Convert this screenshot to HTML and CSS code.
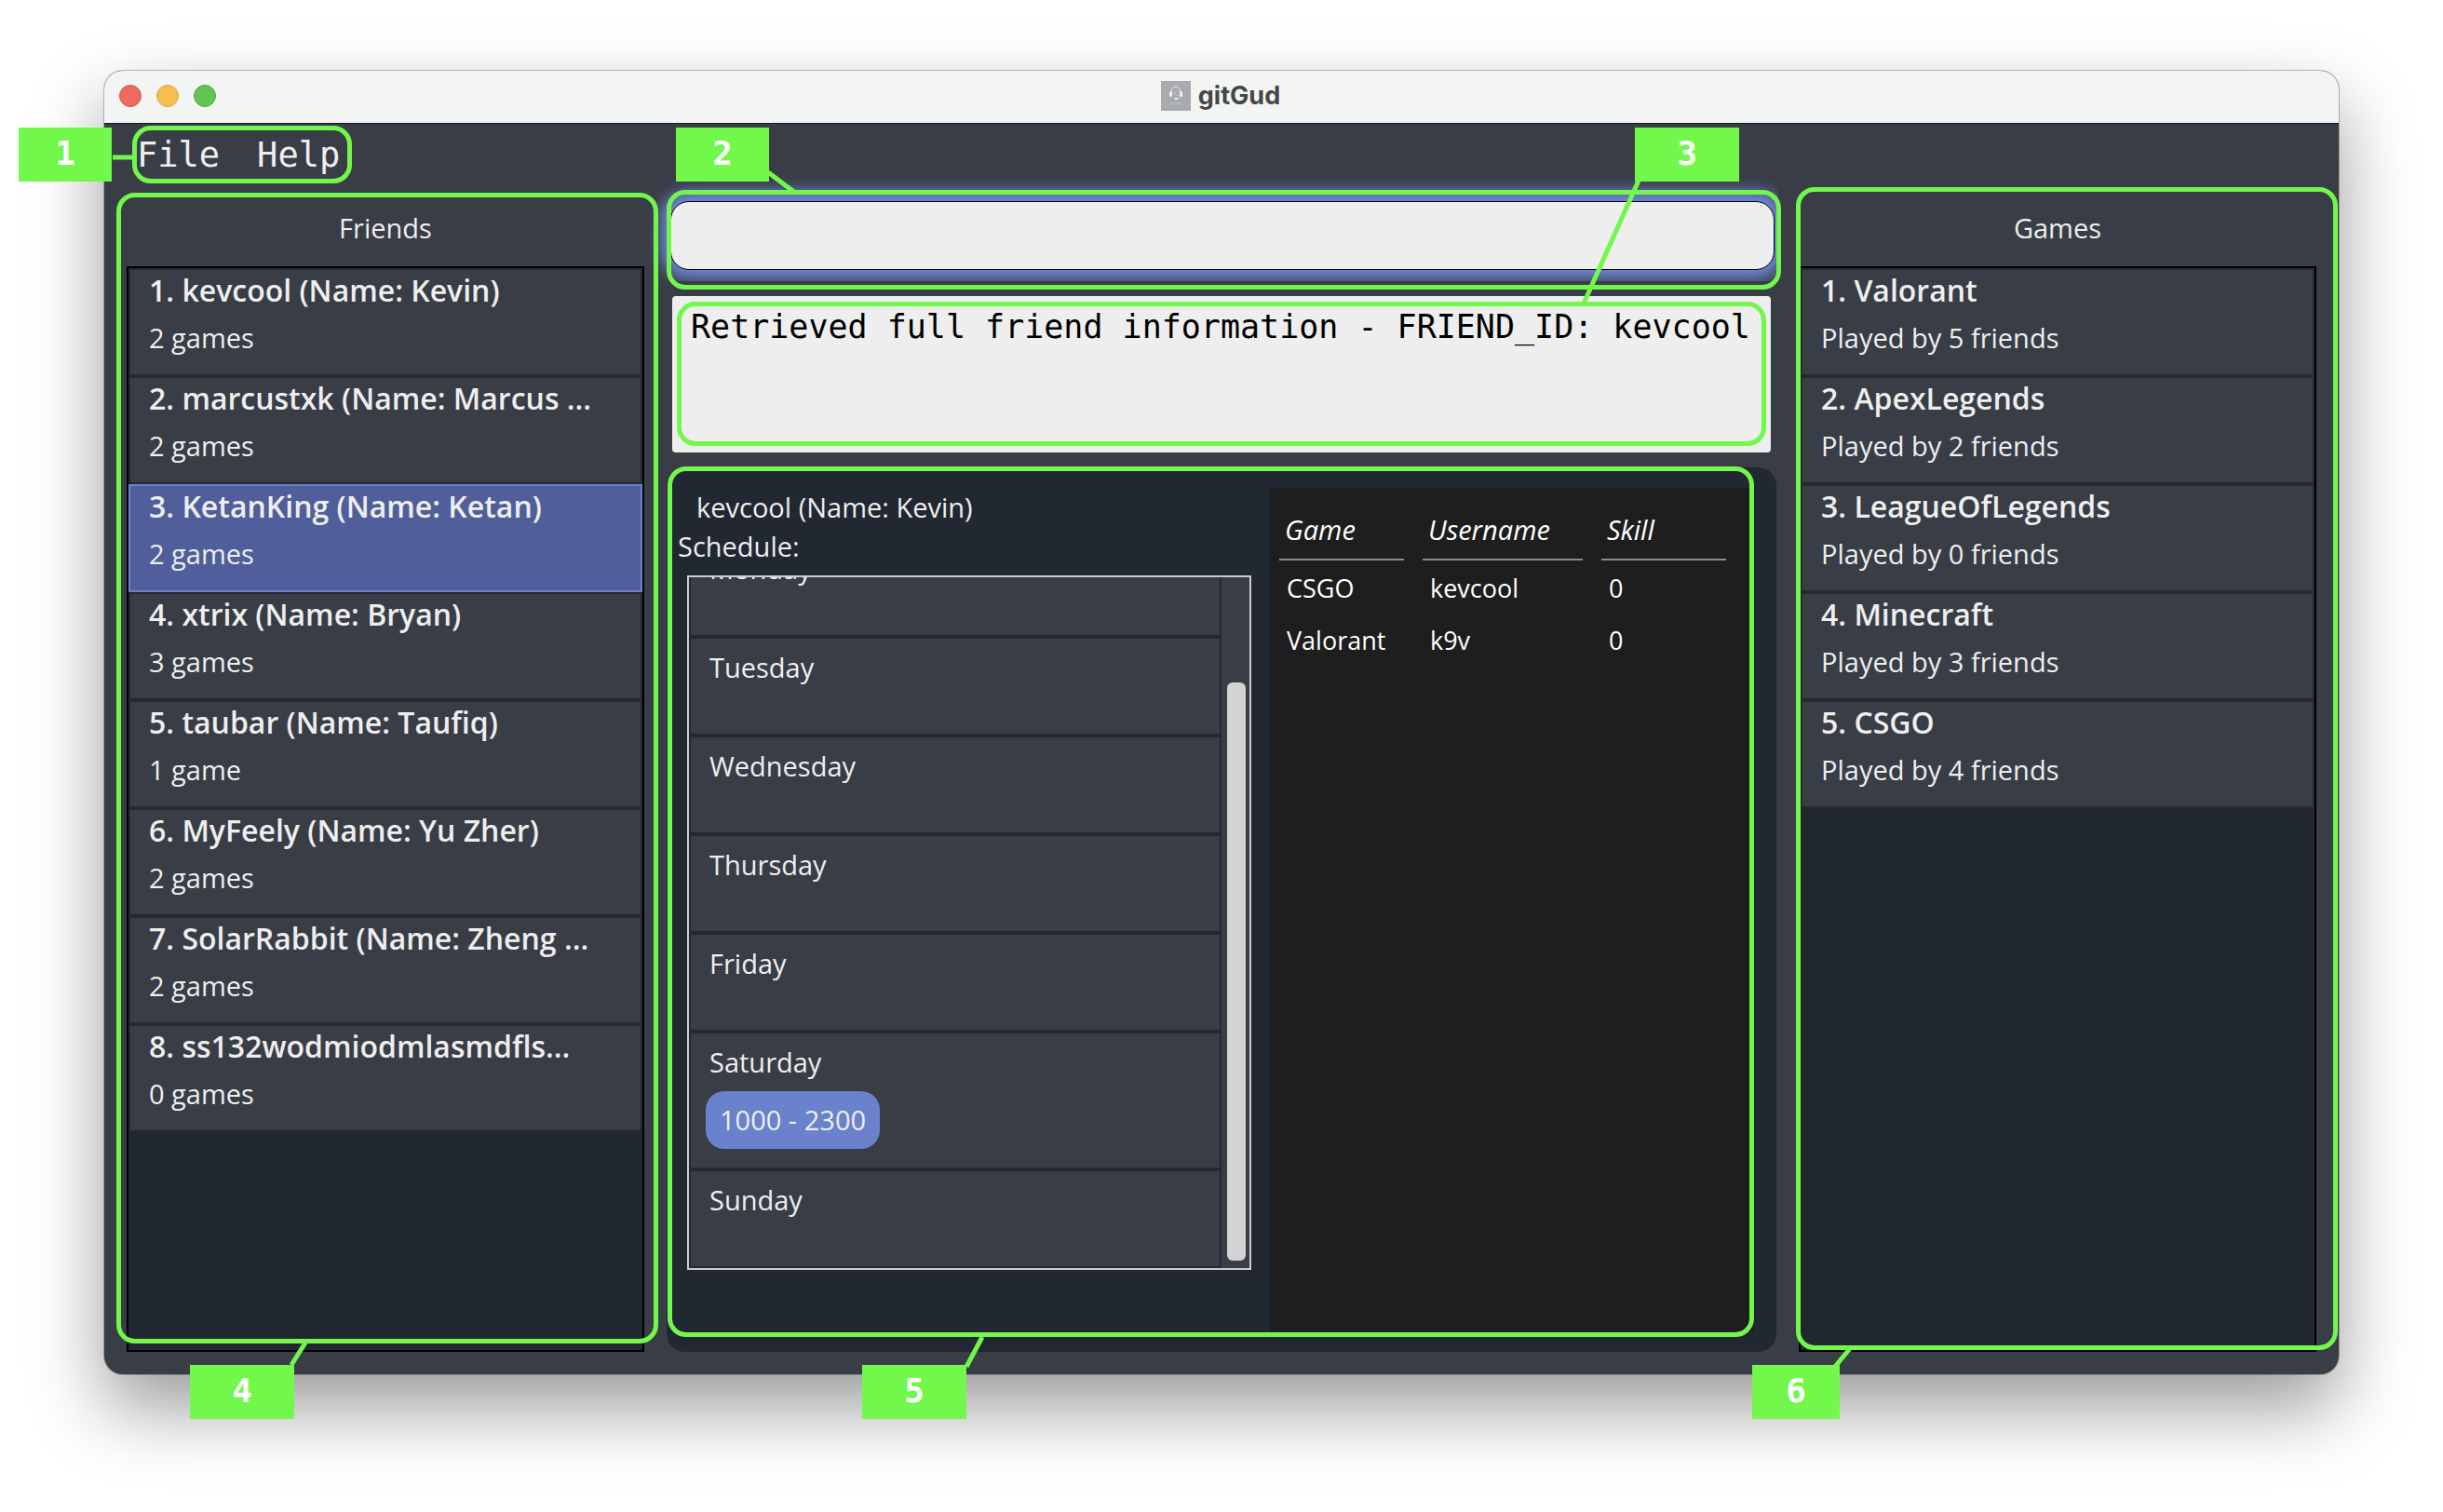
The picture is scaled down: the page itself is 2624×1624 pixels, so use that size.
FILE: index.html
```html
<!DOCTYPE html>
<html lang="en">
<head>
<meta charset="utf-8">
<title>gitGud</title>
<link rel="stylesheet" href="styles.css">
</head>
<body>
<div class="window">
  <header class="titlebar">
    <div class="lights"><span class="light red"></span><span class="light amber"></span><span class="light green"></span></div>
    <svg class="app-icon" viewBox="0 0 32 32" aria-hidden="true">
      <rect width="32" height="32" fill="#a9aaae"/>
      <path d="M11 12a5 6 0 0 1 10 0" fill="none" stroke="#e6e7e9" stroke-width="1"/>
      <rect x="9" y="11" width="3" height="6" rx="1.500" fill="#f1f1f3"/>
      <rect x="20" y="11" width="3" height="6" rx="1.500" fill="#f1f1f3"/>
      <path d="M13.500 12l2 1.500-2 1.500M16.500 15.500h2" fill="none" stroke="#d8d9dc" stroke-width=".7"/>
      <path d="M21.500 17q-1 2-4 2" fill="none" stroke="#dddee1" stroke-width=".8"/>
      <rect x="14.500" y="18" width="3.500" height="2" rx="1" fill="#f1f1f3"/>
      <path d="M9.500 24h13" stroke="#b3b7d4" stroke-width="2.500" stroke-dasharray="1.500 .5"/>
    </svg>
    <h1 class="title">gitGud</h1>
  </header>

  <nav class="menubar">
    <div class="menus">
      <button class="menu" type="button">File</button>
      <button class="menu" type="button">Help</button>
    </div>
    <span class="outline outline-menu"></span>
    <svg class="link link-menu" width="22" height="6" viewBox="0 0 22 6"><path d="M0 3H22"/></svg>
    <span class="badge badge-menu">1</span>
  </nav>

  <main class="content">
    <section class="side">
      <h2 class="side-title">Friends</h2>
      <ul class="cards">
        <li class="card"><strong class="name">1. kevcool (Name: Kevin)</strong><span class="sub">2 games</span></li>
        <li class="card"><strong class="name">2. marcustxk (Name: Marcus ...</strong><span class="sub">2 games</span></li>
        <li class="card selected"><strong class="name">3. KetanKing (Name: Ketan)</strong><span class="sub">2 games</span></li>
        <li class="card"><strong class="name">4. xtrix (Name: Bryan)</strong><span class="sub">3 games</span></li>
        <li class="card"><strong class="name">5. taubar (Name: Taufiq)</strong><span class="sub">1 game</span></li>
        <li class="card"><strong class="name">6. MyFeely (Name: Yu Zher)</strong><span class="sub">2 games</span></li>
        <li class="card"><strong class="name">7. SolarRabbit (Name: Zheng ...</strong><span class="sub">2 games</span></li>
        <li class="card"><strong class="name">8. ss132wodmiodmlasmdfls...</strong><span class="sub">0 games</span></li>
      </ul>
      <span class="outline outline-friends"></span>
      <svg class="link link-friends" width="26" height="30" viewBox="0 0 26 30"><path d="M4 28L21 1"/></svg>
      <span class="badge badge-friends">4</span>
    </section>

    <section class="center">
      <div class="command">
        <input class="command-box" type="text" aria-label="Command">
        <span class="outline outline-command"></span>
        <svg class="link link-command" width="34" height="28" viewBox="0 0 34 28"><path d="M2 3L31 25"/></svg>
        <span class="badge badge-command">2</span>
      </div>
      <div class="result">
        <textarea class="result-box" readonly aria-label="Result">Retrieved full friend information - FRIEND_ID: kevcool</textarea>
        <span class="outline outline-result"></span>
        <svg class="link link-result" width="66" height="136" viewBox="0 0 66 136"><path d="M62 2L3 134"/></svg>
        <span class="badge badge-result">3</span>
      </div>
      <div class="details">
        <div class="profile">
          <p class="profile-name">kevcool (Name: Kevin)</p>
          <p class="profile-label">Schedule:</p>
          <div class="schedule">
            <ul class="days">
              <li class="day">Monday</li>
              <li class="day">Tuesday</li>
              <li class="day">Wednesday</li>
              <li class="day">Thursday</li>
              <li class="day">Friday</li>
              <li class="day busy">Saturday<span class="slot">1000 - 2300</span></li>
              <li class="day">Sunday</li>
            </ul>
            <div class="track"><div class="thumb"></div></div>
          </div>
        </div>
        <div class="games">
          <table class="games-table">
            <colgroup><col class="col-game"><col class="col-user"><col class="col-skill"></colgroup>
            <thead><tr><th scope="col"><span>Game</span></th><th scope="col"><span>Username</span></th><th scope="col"><span>Skill</span></th></tr></thead>
            <tbody>
              <tr><td>CSGO</td><td>kevcool</td><td>0</td></tr>
              <tr><td>Valorant</td><td>k9v</td><td>0</td></tr>
            </tbody>
          </table>
        </div>
        <span class="outline outline-details"></span>
        <svg class="link link-details" width="28" height="36" viewBox="0 0 28 36"><path d="M5 34L22 2"/></svg>
        <span class="badge badge-details">5</span>
      </div>
    </section>

    <section class="side">
      <h2 class="side-title">Games</h2>
      <ul class="cards">
        <li class="card"><strong class="name">1. Valorant</strong><span class="sub">Played by 5 friends</span></li>
        <li class="card"><strong class="name">2. ApexLegends</strong><span class="sub">Played by 2 friends</span></li>
        <li class="card"><strong class="name">3. LeagueOfLegends</strong><span class="sub">Played by 0 friends</span></li>
        <li class="card"><strong class="name">4. Minecraft</strong><span class="sub">Played by 3 friends</span></li>
        <li class="card"><strong class="name">5. CSGO</strong><span class="sub">Played by 4 friends</span></li>
      </ul>
      <span class="outline outline-games"></span>
      <svg class="link link-games" width="28" height="28" viewBox="0 0 28 28"><path d="M4 25L23 2"/></svg>
      <span class="badge badge-games">6</span>
    </section>
  </main>
</div>
</body>
</html>
```
FILE: styles.css
```css
* { box-sizing: border-box; }

body {
  margin: 0;
  min-height: 100vh;
  display: flex;
  padding: 76px 112px 148px;
  background: #fff;
  color: #eee;
  font-family: "Open Sans", "Noto Sans", sans-serif;
  font-size: 29px;
  line-height: 42px;
}

h1, h2, p, ul { margin: 0; padding: 0; }
ul { list-style: none; }

.window {
  flex: 1;
  min-width: 0;
  display: flex;
  flex-direction: column;
  border-radius: 20px;
  background: #393d46;
  box-shadow: 0 0 0 1px rgba(0, 0, 0, .25), 0 36px 80px rgba(0, 0, 0, .4);
}

.titlebar {
  display: grid;
  grid-template-columns: 1fr auto auto 1fr;
  align-items: center;
  column-gap: 8px;
  height: 57px;
  padding: 0 18px 2px 16px;
  border-radius: 20px 20px 0 0;
  border-bottom: 1px solid #171b23;
  background: #f3f5f4;
}
.lights { display: flex; gap: 16px; }
.light { width: 24px; height: 24px; border-radius: 50%; border: 1px solid; }
.red { background: #ed6a5e; border-color: #d55548; }
.amber { background: #f5bf4f; border-color: #d9a23c; }
.green { background: #61c554; border-color: #50a73f; }
.app-icon { width: 32px; height: 32px; }
.title { color: #464847; font: 700 27px/32px Inter, sans-serif; }

.menubar { position: relative; height: 71px; padding: 13px 35px; }
.menus { display: flex; gap: 40px; }
.menu {
  padding: 0;
  border: 0;
  background: none;
  color: #eee;
  font: 37px/42px "DejaVu Sans Mono", monospace;
}

.content {
  flex: 1;
  display: grid;
  grid-template-columns: minmax(0, 139fr) minmax(0, 298fr) minmax(0, 139fr);
  gap: 24px;
  padding: 0 24px 24px;
}

.side { position: relative; display: flex; flex-direction: column; }
.side-title { font-size: 29px; font-weight: 400; line-height: 82px; text-align: center; }
.cards { flex: 1; border: 2px solid #000; background: #212831; }
.card {
  display: flex;
  flex-direction: column;
  gap: 8px;
  height: 116px;
  padding: 0 20px;
  border: 2px solid #232833;
  background: #393d46;
}
.card.selected { background: #505f9b; border-color: #6a80cb; }
.name { font-size: 32px; font-weight: 600; line-height: 44px; white-space: nowrap; }

.center { display: flex; flex-direction: column; padding-top: 12px; }

.command { position: relative; display: flex; margin: 0 2px 28px 4px; }
.command-box {
  width: 100%;
  height: 74px;
  padding: 0 20px;
  border: 1px solid #000;
  border-radius: 20px;
  background: #eee;
  color: #000;
  font: 35px/42px "DejaVu Sans Mono", monospace;
  box-shadow: 0 -1px 16px 10px #7089dc;
  clip-path: inset(-40px -4px -12px -24px);
}

.result { position: relative; display: flex; margin: 0 6px 16px; }
.result-box {
  width: 100%;
  height: 168px;
  padding: 12px 20px;
  border: 0;
  border-radius: 4px;
  background: #eee;
  color: #000;
  font: 35px/42px "DejaVu Sans Mono", monospace;
  resize: none;
}

.details {
  position: relative;
  flex: 1;
  display: grid;
  grid-template-columns: minmax(0, 616fr) minmax(0, 520fr);
  gap: 20px;
  padding: 22px 24px 22px 12px;
  border-radius: 20px;
  background: #212831;
}
.profile { display: flex; flex-direction: column; padding-bottom: 66px; }
.profile-name { padding-left: 20px; }
.schedule {
  flex: 1 1 0;
  min-height: 0;
  display: flex;
  margin: 10px 0 0 10px;
  border: 2px solid #ccc;
  background: #393d46;
  overflow: hidden;
}
.days {
  flex: 1;
  height: 742px;
  display: flex;
  flex-direction: column;
  justify-content: flex-end;
}
.day {
  flex: none;
  height: 106px;
  padding: 10px 20px;
  border: 2px solid #232833;
}
.day.busy { height: 148px; }
.slot {
  display: block;
  width: fit-content;
  margin: 10px 0 0 -4px;
  padding: 10px 15px;
  border-radius: 20px;
  background: #6a81cb;
}
.track { width: 30px; padding: 113px 4px 8px 6px; display: flex; }
.thumb { flex: 1; border-radius: 6px; background: #d3d3d3; }

.games { background: #1e1e1e; color: #fff; }
.games-table { width: 500px; max-width: 100%; table-layout: fixed; border-collapse: collapse; }
.col-game, .col-skill { width: 154px; }
.col-user { width: 192px; }
.games-table th { padding: 0 10px; text-align: left; font-weight: 400; font-style: italic; }
.games-table th span { display: block; padding: 24px 6px 10px; border-bottom: 2px solid #8c8c8c; }
.games-table td { height: 56px; padding: 4px 18px 0; font-size: 27px; }

/* Numbered callouts drawn over the window */
.outline {
  position: absolute;
  border: 5px solid #72f74b;
  border-radius: 20px;
  pointer-events: none;
}
.badge {
  position: absolute;
  width: 112px;
  height: 58px;
  background: #72f74b;
  color: #fff;
  font: 700 36px/56px "DejaVu Sans Mono", monospace;
  text-align: center;
}
.link { position: absolute; z-index: 2; fill: none; stroke: #72f74b; stroke-width: 5; }
.outline, .badge { z-index: 1; }

.outline-menu { left: 30px; top: 2px; width: 236px; height: 62px; }
.link-menu { left: 9px; top: 33px; }
.badge-menu { left: -92px; top: 4px; width: 100px; }

.outline-friends { inset: 3px -15px 9px -11px; }
.link-friends { left: 173px; bottom: -16px; }
.badge-friends { left: 68px; bottom: -72px; }

.outline-command { inset: -12px -7px -21px -4px; }
.link-command { left: 103px; top: -34px; }
.badge-command { left: 6px; top: -79px; width: 100px; }

.outline-result { inset: 6px 5px 7px; }
.link-result { right: 138px; top: -126px; }
.badge-result { right: 34px; top: -181px; }

.outline-details { inset: -1px 24px 16px 1px; }
.link-details { left: 317px; bottom: -18px; }
.badge-details { left: 210px; bottom: -72px; }

.outline-games { inset: -3px -23px 2px -3px; }
.link-games { left: 34px; bottom: -20px; }
.badge-games { left: -50px; bottom: -72px; width: 94px; }
```
